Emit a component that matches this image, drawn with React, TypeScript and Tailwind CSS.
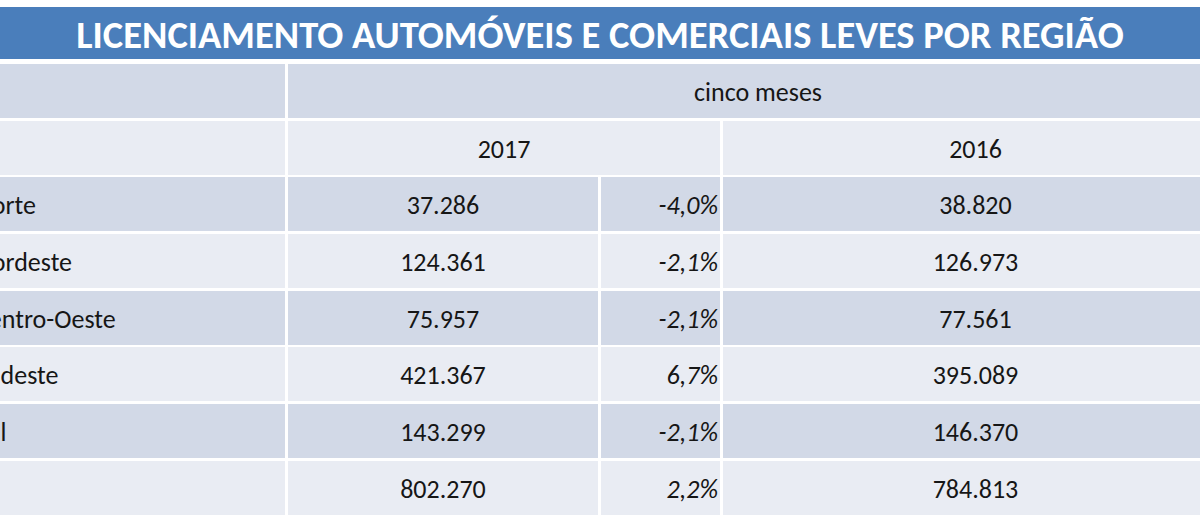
import React from "react";

const rows = [
  { label: "Norte", a: "37.286", p: "-4,0%", b: "38.820", dark: true },
  { label: "Nordeste", a: "124.361", p: "-2,1%", b: "126.973", dark: false },
  { label: "Centro-Oeste", a: "75.957", p: "-2,1%", b: "77.561", dark: true },
  { label: "Sudeste", a: "421.367", p: "6,7%", b: "395.089", dark: false },
  { label: "Sul", a: "143.299", p: "-2,1%", b: "146.370", dark: true },
  { label: "", a: "802.270", p: "2,2%", b: "784.813", dark: false },
];

export default function App() {
  return (
    <div
      className="w-[1200px] h-[520px] overflow-hidden bg-white text-[#161616]"
      style={{ fontFamily: "Carlito, Calibri, Lato, 'Noto Sans', sans-serif" }}
    >
      <div className="pt-[7px]">
        <div className="h-[52px] bg-[#4a7ebb] flex items-center justify-center text-white font-bold text-[38.5px] leading-none pt-[4px]">
          LICENCIAMENTO AUTOMÓVEIS E COMERCIAIS LEVES POR REGIÃO
        </div>
      </div>
      <div className="mt-[5px] -ml-[22px] w-[1250px] grid grid-cols-[307px_310px_119px_505px] gap-x-[3px] gap-y-[2.67px] auto-rows-[54px] text-[26px] leading-none">
        <div className="bg-[#d2d9e7]" />
        <div className="col-span-3 bg-[#d2d9e7] flex items-center justify-center pt-[2px]">cinco meses</div>

        <div className="bg-[#e9ecf3]" />
        <div className="col-span-2 bg-[#e9ecf3] flex items-center justify-center pt-[2px]">2017</div>
        <div className="bg-[#e9ecf3] flex items-center justify-center pt-[2px]">2016</div>

        {rows.map((r) => {
          const bg = r.dark ? "bg-[#d2d9e7]" : "bg-[#e9ecf3]";
          return (
            <React.Fragment key={r.a}>
              <div className={`${bg} flex items-center pt-[2px] overflow-hidden`}>
                <span className="-ml-[3px] whitespace-nowrap">{r.label}</span>
              </div>
              <div className={`${bg} flex items-center justify-center pt-[2px]`}>{r.a}</div>
              <div className={`${bg} flex items-center justify-end italic pr-[2px] pt-[2px]`}>{r.p}</div>
              <div className={`${bg} flex items-center justify-center pt-[2px]`}>{r.b}</div>
            </React.Fragment>
          );
        })}
      </div>
    </div>
  );
}
